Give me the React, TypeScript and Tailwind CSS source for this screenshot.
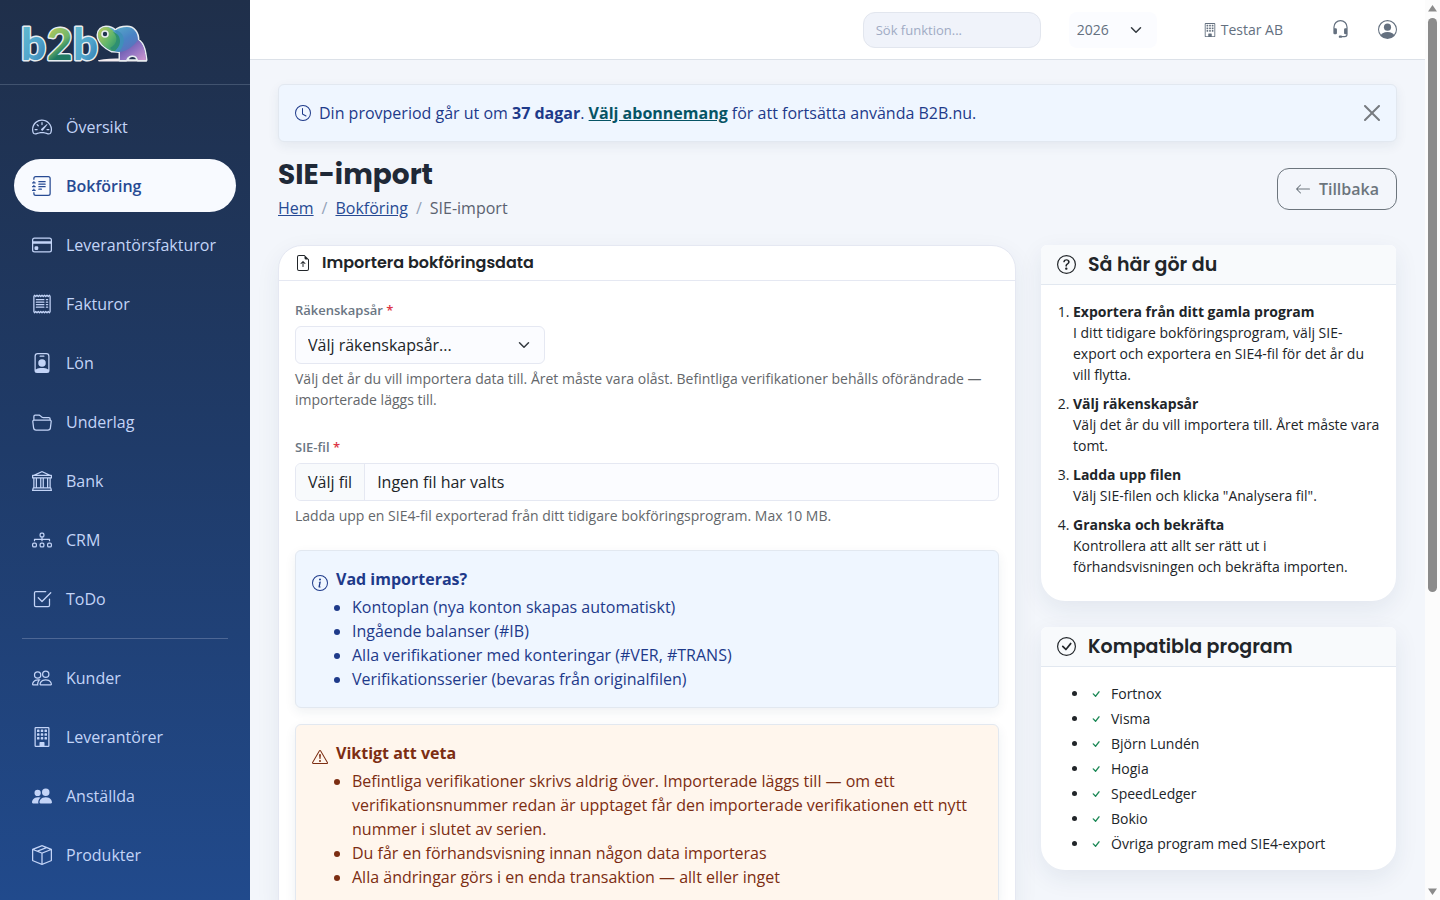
import type { ReactNode } from "react";
import type { IconType } from "react-icons";
import {
  BsArrowLeft,
  BsBank,
  BsBoxSeam,
  BsBuilding,
  BsCheck,
  BsCheckCircle,
  BsCheck2Square,
  BsClock,
  BsCreditCard,
  BsDiagram3,
  BsExclamationTriangle,
  BsFileEarmarkArrowUp,
  BsFolder2Open,
  BsHeadset,
  BsInfoCircle,
  BsJournalText,
  BsPeople,
  BsPeopleFill,
  BsPersonBadge,
  BsPersonCircle,
  BsQuestionCircle,
  BsReceipt,
  BsSpeedometer2,
} from "react-icons/bs";

type NavItem = {
  label: string;
  icon: IconType;
  active?: boolean;
};

const MAIN_NAV: NavItem[] = [
  { label: "Översikt", icon: BsSpeedometer2 },
  { label: "Bokföring", icon: BsJournalText, active: true },
  { label: "Leverantörsfakturor", icon: BsCreditCard },
  { label: "Fakturor", icon: BsReceipt },
  { label: "Lön", icon: BsPersonBadge },
  { label: "Underlag", icon: BsFolder2Open },
  { label: "Bank", icon: BsBank },
  { label: "CRM", icon: BsDiagram3 },
  { label: "ToDo", icon: BsCheck2Square },
];

const REGISTER_NAV: NavItem[] = [
  { label: "Kunder", icon: BsPeople },
  { label: "Leverantörer", icon: BsBuilding },
  { label: "Anställda", icon: BsPeopleFill },
  { label: "Produkter", icon: BsBoxSeam },
];

const STEPS = [
  {
    title: "Exportera från ditt gamla program",
    text: "I ditt tidigare bokföringsprogram, välj SIE-export och exportera en SIE4-fil för det år du vill flytta.",
  },
  {
    title: "Välj räkenskapsår",
    text: "Välj det år du vill importera till. Året måste vara tomt.",
  },
  {
    title: "Ladda upp filen",
    text: 'Välj SIE-filen och klicka "Analysera fil".',
  },
  {
    title: "Granska och bekräfta",
    text: "Kontrollera att allt ser rätt ut i förhandsvisningen och bekräfta importen.",
  },
];

const PROGRAMS = [
  "Fortnox",
  "Visma",
  "Björn Lundén",
  "Hogia",
  "SpeedLedger",
  "Bokio",
  "Övriga program med SIE4-export",
];

const IMPORTED = [
  "Kontoplan (nya konton skapas automatiskt)",
  "Ingående balanser (#IB)",
  "Alla verifikationer med konteringar (#VER, #TRANS)",
  "Verifikationsserier (bevaras från originalfilen)",
];

const WARNINGS = [
  "Befintliga verifikationer skrivs aldrig över. Importerade läggs till — om ett verifikationsnummer redan är upptaget får den importerade verifikationen ett nytt nummer i slutet av serien.",
  "Du får en förhandsvisning innan någon data importeras",
  "Alla ändringar görs i en enda transaktion — allt eller inget",
];

function Logo() {
  return (
    <svg width="130" height="72" viewBox="-2 0 130 72" role="img" aria-label="b2b">
      <defs>
        <linearGradient id="letter-blue" x1="0" y1="0" x2="1" y2="1">
          <stop offset="0" stopColor="#66bfd0" />
          <stop offset="0.6" stopColor="#4fa3cc" />
          <stop offset="1" stopColor="#2f74a8" />
        </linearGradient>
        <linearGradient id="letter-green" x1="0" y1="0" x2="0.4" y2="1">
          <stop offset="0.2" stopColor="#b5c95a" />
          <stop offset="0.6" stopColor="#6fb56a" />
          <stop offset="0.8" stopColor="#1f7a62" />
        </linearGradient>
        <linearGradient id="trunk" x1="0" y1="0" x2="1" y2="0.8">
          <stop offset="0" stopColor="#c3cc5a" />
          <stop offset="0.6" stopColor="#5fb56c" />
          <stop offset="1" stopColor="#2a8f6c" />
        </linearGradient>
        <linearGradient id="body" x1="0" y1="0" x2="0.8" y2="1">
          <stop offset="0" stopColor="#5cbccb" />
          <stop offset="0.5" stopColor="#4a83c4" />
          <stop offset="1" stopColor="#6b63b5" />
        </linearGradient>
        <linearGradient id="leg" x1="0" y1="0" x2="1" y2="1">
          <stop offset="0" stopColor="#4c4c9c" />
          <stop offset="0.5" stopColor="#8a6fc0" />
          <stop offset="1" stopColor="#cf97cf" />
        </linearGradient>
      </defs>
      <g
        fontFamily="Lato, sans-serif"
        fontSize="44"
        fontWeight="900"
        stroke="#e8edf0"
        strokeWidth="3"
        strokeLinejoin="round"
        paintOrder="stroke"
      >
        <text x="-1" y="54" fill="url(#letter-blue)">b</text>
        <text x="25" y="54" fill="url(#letter-green)">2</text>
        <text x="51" y="54" fill="url(#letter-blue)">b</text>
      </g>
      <path d="M76 54.200c7-1.600 16-1.700 24-1.700h24l1 3H78c-2 0-2-.8-2-1.300Z" fill="#f3ecef" />
      <path
        d="M98 54v-8c-2-1-5-1-8-1C83 42 76 36 76 29c0-5 4-8 8-8 4 0 7 1 9 4 3-3 7-4 12-4 7 0 11 6 11 13 6 4 7 12 8 20h-8c-1-6-11-6-12 0Z"
        fill="url(#body)"
        stroke="#e8edf0"
        strokeWidth="3"
        strokeLinejoin="round"
        paintOrder="stroke"
      />
      <path
        d="M98 54v-8c7-1 13-5 18-12 6 4 7 12 8 20h-8c-1-6-11-6-12 0Z"
        fill="url(#leg)"
      />
      <path d="M92 24c11 1 13 13 5 22l-7-1c8-5 8-15 2-21Z" fill="#3f8fb9" />
      <path
        d="M90 45C83 42 76 36 76 29c0-5 4-8 8-8 3 0 6 2 8 5 6 4 7 13 1 19Z"
        fill="url(#trunk)"
      />
      <path d="M91 26c5 4 5 12-3 16l2 2c5 0 8-4 8-9s-3-8-7-9Z" fill="#2d8f72" />
      <circle cx="83" cy="28" r="3" fill="#20334f" stroke="#e8edf0" strokeWidth="1.600" />
      <path
        d="M106 54c1-5 8-5 9 0Z"
        fill="#20334f"
        stroke="#e8edf0"
        strokeWidth="1.600"
        strokeLinejoin="round"
      />
    </svg>
  );
}

function NavLink({ item }: { item: NavItem }) {
  const Icon = item.icon;

  return (
    <li>
      <a
        href="#"
        aria-current={item.active ? "page" : undefined}
        className={`flex h-[53px] items-center gap-[14px] rounded-full px-[18px] ${
          item.active ? "bg-[#f8faff] font-semibold text-[#274a93]" : "text-[#c3d4f7]"
        }`}
      >
        <Icon size={20} className="shrink-0" />
        {item.label}
      </a>
    </li>
  );
}

function Sidebar() {
  return (
    <aside className="w-[250px] shrink-0 overflow-hidden bg-linear-to-b from-[#1f2f4a] via-[#1f3b69] to-[#214a8c]">
      <div className="flex h-[85px] items-center border-b border-[#41536f] px-5">
        <a href="#">
          <Logo />
        </a>
      </div>
      <nav className="px-[14px] pt-[15px]">
        <ul className="flex flex-col gap-[6px]">
          {MAIN_NAV.map((item) => (
            <NavLink key={item.label} item={item} />
          ))}
        </ul>
        <hr className="mx-2 mt-[13px] mb-3 border-[#4d6795]" />
        <ul className="flex flex-col gap-[6px]">
          {REGISTER_NAV.map((item) => (
            <NavLink key={item.label} item={item} />
          ))}
        </ul>
      </nav>
    </aside>
  );
}

function Chevron() {
  return (
    <svg
      viewBox="0 0 16 16"
      className="pointer-events-none absolute top-1/2 right-[13px] h-3 w-4 -translate-y-1/2"
      fill="none"
      stroke="#343a40"
      strokeWidth="2"
      strokeLinecap="round"
      strokeLinejoin="round"
    >
      <path d="m2 5 6 6 6-6" />
    </svg>
  );
}

function Topbar() {
  return (
    <header className="flex h-[60px] shrink-0 items-center justify-end border-b border-[#dce1e8] bg-white px-7 text-sm text-[#64707f]">
      <input
        type="search"
        aria-label="Sök funktion"
        placeholder="Sök funktion..."
        className="h-9 w-[178px] rounded-xl border border-[#e2e6ee] bg-[#f0f3fa] px-3 text-[13px] placeholder:text-[#a0abc4]"
      />
      <div className="relative ml-7">
        <select
          aria-label="År"
          defaultValue="2026"
          className="h-9 w-[88px] appearance-none rounded-lg bg-[#fbfcff] pl-2"
        >
          <option>2026</option>
          <option>2025</option>
        </select>
        <Chevron />
      </div>
      <a href="#" className="ml-[46px] flex items-center gap-1">
        <BsBuilding size={14} />
        Testar AB
      </a>
      <a href="#" aria-label="Support" className="ml-12">
        <BsHeadset size={19} />
      </a>
      <a href="#" aria-label="Konto" className="ml-7">
        <BsPersonCircle size={19} />
      </a>
    </header>
  );
}

function TrialBanner() {
  return (
    <div
      role="alert"
      className="flex items-center rounded-md border border-[#e2e8f0] bg-[#eff6ff] p-4 text-[#1e3a8a] shadow-[0_4px_12px_rgba(30,50,90,0.07)]"
    >
      <BsClock size={16} className="mr-2 shrink-0" />
      <p className="flex-1">
        Din provperiod går ut om <strong>37 dagar</strong>.{" "}
        <a href="#" className="font-bold text-[#065465] underline">
          Välj abonnemang
        </a>{" "}
        för att fortsätta använda B2B.nu.
      </p>
      <button type="button" aria-label="Stäng" className="text-[#777b80]">
        <svg width="16" height="16" viewBox="0 0 16 16" fill="currentColor">
          <path d="M.293.293a1 1 0 0 1 1.414 0L8 6.586 14.293.293a1 1 0 1 1 1.414 1.414L9.414 8l6.293 6.293a1 1 0 0 1-1.414 1.414L8 9.414l-6.293 6.293a1 1 0 0 1-1.414-1.414L6.586 8 .293 1.707a1 1 0 0 1 0-1.414Z" />
        </svg>
      </button>
    </div>
  );
}

function PageHeading() {
  return (
    <div className="mt-4 mb-[25px] flex items-center justify-between">
      <div>
        <h1 className="font-[Poppins,Inter,sans-serif] text-[28px] leading-[34px] font-bold text-[#1f2937]">
          SIE-import
        </h1>
        <nav aria-label="Brödsmulor" className="mt-1">
          <ol className="flex gap-2 text-[#5b6270]">
            <li>
              <a href="#" className="text-[#274a93] underline">
                Hem
              </a>
            </li>
            <li aria-hidden="true" className="text-[#94a3b8]">/</li>
            <li>
              <a href="#" className="text-[#274a93] underline">
                Bokföring
              </a>
            </li>
            <li aria-hidden="true" className="text-[#94a3b8]">/</li>
            <li aria-current="page">SIE-import</li>
          </ol>
        </nav>
      </div>
      <button
        type="button"
        className="flex h-[42px] items-center gap-2 rounded-xl border border-[#6c757d] px-[17px] font-semibold text-[#6c757d]"
      >
        <BsArrowLeft size={16} />
        Tillbaka
      </button>
    </div>
  );
}

type NoticeProps = {
  icon: IconType;
  title: string;
  items: string[];
  tone: string;
};

function Notice({ icon: Icon, title, items, tone }: NoticeProps) {
  return (
    <div
      className={`flex gap-2 rounded-md border border-[#e2e8f0] p-4 shadow-[0_4px_12px_rgba(30,50,90,0.07)] ${tone}`}
    >
      <Icon size={16} className="mt-2 shrink-0" />
      <div>
        <strong>{title}</strong>
        <ul className="mt-1 list-disc pl-4">
          {items.map((item) => (
            <li key={item}>{item}</li>
          ))}
        </ul>
      </div>
    </div>
  );
}

function ImportCard() {
  return (
    <section className="col-span-8 rounded-3xl border border-[#e5e8f2] bg-white shadow-[0_8px_24px_rgba(30,50,90,0.07)]">
      <h2 className="flex items-center gap-[11px] border-b border-[#e5e8f2] px-4 py-[5px] font-[Poppins,Inter,sans-serif] leading-6 font-semibold">
        <BsFileEarmarkArrowUp size={16} />
        Importera bokföringsdata
      </h2>
      <form className="p-4">
        <label
          htmlFor="fiscal-year"
          className="mb-[2px] block text-[13px] leading-[27px] font-semibold text-[#6b7683]"
        >
          Räkenskapsår <span className="text-[#dc3545]">*</span>
        </label>
        <div className="relative w-[250px]">
          <select
            id="fiscal-year"
            className="h-[38px] w-full appearance-none rounded-md border border-[#e5e8f2] bg-[#fbfcff] px-3"
          >
            <option>Välj räkenskapsår...</option>
          </select>
          <Chevron />
        </div>
        <p className="mt-1 text-sm leading-[21px] text-[#64676b]">
          Välj det år du vill importera data till. Året måste vara olåst. Befintliga verifikationer
          behålls oförändrade — importerade läggs till.
        </p>

        <label
          htmlFor="sie-file"
          className="mt-6 mb-[2px] block text-[13px] leading-[27px] font-semibold text-[#6b7683]"
        >
          SIE-fil <span className="text-[#dc3545]">*</span>
        </label>
        <label
          htmlFor="sie-file"
          className="flex h-[38px] items-stretch overflow-hidden rounded-md border border-[#e5e8f2] bg-[#fbfcff] leading-9"
        >
          <span className="border-r border-[#e5e8f2] bg-[#f8fafc] px-3">Välj fil</span>
          <span className="px-3">Ingen fil har valts</span>
        </label>
        <input id="sie-file" type="file" accept=".se,.si,.sie" className="sr-only" />
        <p className="mt-1 mb-6 text-sm leading-[21px] text-[#64676b]">
          Ladda upp en SIE4-fil exporterad från ditt tidigare bokföringsprogram. Max 10 MB.
        </p>

        <div className="flex flex-col gap-4">
          <Notice
            icon={BsInfoCircle}
            title="Vad importeras?"
            items={IMPORTED}
            tone="bg-[#eff6ff] text-[#1e3a8a]"
          />
          <Notice
            icon={BsExclamationTriangle}
            title="Viktigt att veta"
            items={WARNINGS}
            tone="bg-[#fff6ed] text-[#7c2d12]"
          />
        </div>
      </form>
    </section>
  );
}

type SideCardProps = {
  icon: IconType;
  title: string;
  children: ReactNode;
};

function SideCard({ icon: Icon, title, children }: SideCardProps) {
  return (
    <section className="rounded-t-md rounded-b-3xl bg-white text-sm leading-[21px] shadow-[0_8px_24px_rgba(30,50,90,0.08)]">
      <h2 className="flex h-10 items-center gap-3 rounded-t-md border-b border-[#e2e8f0] bg-[#f8fafc] px-4 font-[Poppins,Inter,sans-serif] text-[19px] leading-6 font-semibold">
        <Icon size={19} />
        {title}
      </h2>
      <div className="p-4">{children}</div>
    </section>
  );
}

function Scrollbar() {
  return (
    <div aria-hidden="true" className="flex w-[15px] shrink-0 flex-col items-center bg-[#fcfcfc] py-1">
      <svg width="9" height="9" viewBox="0 0 9 9" fill="#8b8b8b">
        <path d="M4.500 1 9 7.500H0Z" />
      </svg>
      <div className="mt-[5px] flex-1">
        <div className="h-[66%] w-[9px] rounded-full bg-[#8b8b8b]" />
      </div>
      <svg width="9" height="9" viewBox="0 0 9 9" fill="#8b8b8b">
        <path d="M4.500 8 9 1.500H0Z" />
      </svg>
    </div>
  );
}

export default function App() {
  return (
    <div className="flex h-screen overflow-hidden bg-[#f3f6fb] font-['Open_Sans',sans-serif] text-base leading-6 text-[#212529]">
      <Sidebar />
      <div className="flex min-w-0 flex-1 flex-col">
        <Topbar />
        <main className="flex-1 overflow-hidden px-7 pt-6">
          <TrialBanner />
          <PageHeading />
          <div className="grid grid-cols-12 items-start gap-6">
            <ImportCard />
            <aside className="col-span-4 mx-px flex flex-col gap-[26px]">
              <SideCard icon={BsQuestionCircle} title="Så här gör du">
                <ol className="mb-2 flex list-decimal flex-col gap-2 pl-4">
                  {STEPS.map((step) => (
                    <li key={step.title}>
                      <strong>{step.title}</strong>
                      <br />
                      {step.text}
                    </li>
                  ))}
                </ol>
              </SideCard>
              <SideCard icon={BsCheckCircle} title="Kompatibla program">
                <ul className="flex list-disc flex-col gap-1 pl-8">
                  {PROGRAMS.map((program) => (
                    <li key={program}>
                      <BsCheck size={14} className="mr-2 mb-[3px] inline text-[#198754]" />
                      {program}
                    </li>
                  ))}
                </ul>
              </SideCard>
            </aside>
          </div>
        </main>
      </div>
      <Scrollbar />
    </div>
  );
}
